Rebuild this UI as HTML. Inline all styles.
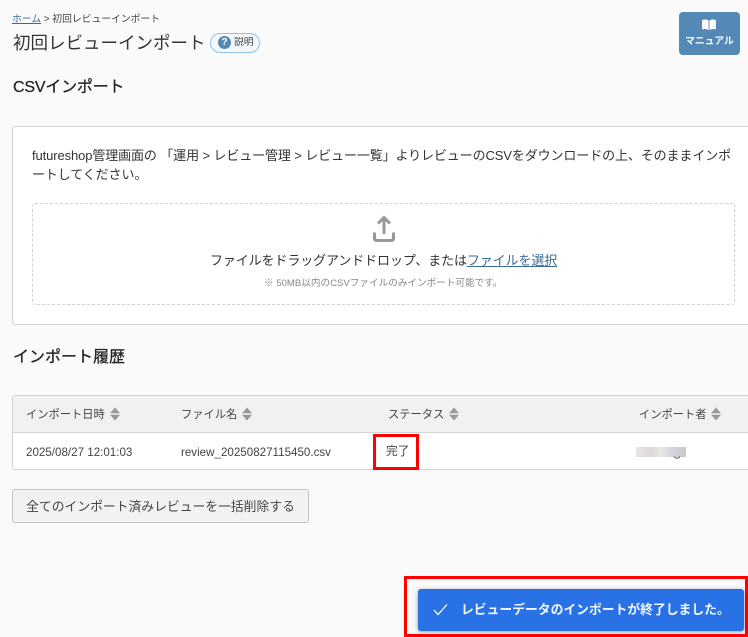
<!DOCTYPE html>
<html lang="ja">
<head>
<meta charset="utf-8">
<style>
html,body{margin:0;padding:0;width:748px;height:637px;overflow:hidden;background:#fafafa;}
body{font-family:"Liberation Sans","Noto Sans CJK JP",sans-serif;color:#333;position:relative;}
.a{position:absolute;white-space:nowrap;}
.th{font-size:11.25px;color:#444;top:407px;line-height:16px;}
.sort{position:absolute;width:10px;height:14px;top:407px;}
.td{font-size:11.6px;color:#444;top:445px;line-height:16px;}
</style>
</head>
<body>
<div class="a" style="left:12px;top:12.500px;font-size:9.800px;line-height:14px;color:#444;"><span style="color:#3b6a96;text-decoration:underline;">ホーム</span> &gt; 初回レビューインポート</div>
<div class="a" style="left:13px;top:31px;font-size:17.500px;line-height:24px;color:#333;">初回レビューインポート</div>
<div class="a" style="left:210px;top:33px;width:48px;height:18px;border:1px solid #8fc3e8;border-radius:10px;background:#f2f8fd;"></div>
<div class="a" style="left:218px;top:36px;width:13px;height:13px;border-radius:50%;background:#5589b5;color:#fff;font-size:10px;font-weight:bold;line-height:13px;text-align:center;">?</div>
<div class="a" style="left:234px;top:35.500px;font-size:9.800px;line-height:14px;color:#444;">説明</div>

<div class="a" style="left:679px;top:12px;width:61px;height:43px;background:#5589b5;border-radius:4px;"></div>
<svg class="a" style="left:702px;top:19px;" width="14" height="11" viewBox="0 0 15 12"><path d="M0 1.200C2.500 .2 5 .4 7 1.600V12C5 10.800 2.500 10.600 0 11.200ZM8 1.600C10 .4 12.500 .2 15 1.200V11.200C12.500 10.600 10 10.800 8 12Z" fill="#fff"/></svg>
<div class="a" style="left:679px;width:61px;top:35px;text-align:center;font-size:9.800px;font-weight:bold;line-height:14px;color:#f4f8fb;">マニュアル</div>

<div class="a" style="left:13px;top:77px;font-size:16px;letter-spacing:-.2px;line-height:22px;color:#222;-webkit-text-stroke:.25px #222;">CSVインポート</div>

<div class="a" style="left:12px;top:126px;width:740px;height:197px;background:#fff;border:1px solid #d4d4d4;border-radius:3px;"></div>
<div class="a" style="left:32px;top:146px;font-size:13px;line-height:19px;color:#333;letter-spacing:-.11px;">futureshop管理画面の 「運用 &gt; レビュー管理 &gt; レビュー一覧」よりレビューのCSVをダウンロードの上、そのままインポ<br>ートしてください。</div>
<div class="a" style="left:32px;top:203px;width:701px;height:100px;border:1px dashed #d0d0d0;border-radius:3px;"></div>
<svg class="a" style="left:372px;top:215px;" width="24" height="28" viewBox="0 0 24 28"><path d="M12 19V3M6 8.500L12 2.500 18 8.500M2.500 17.500V23.500Q2.500 25.500 4.500 25.500H19.500Q21.500 25.500 21.500 23.500V17.500" fill="none" stroke="#999" stroke-width="3"/></svg>
<div class="a" style="left:210px;top:252px;font-size:13px;line-height:18px;color:#333;letter-spacing:-.11px;">ファイルをドラッグアンドドロップ、または<span style="color:#3b6a96;text-decoration:underline;">ファイルを選択</span></div>
<div class="a" style="left:264px;top:277px;font-size:9.600px;line-height:14px;color:#888;">※ 50MB以内のCSVファイルのみインポート可能です。</div>

<div class="a" style="left:13px;top:347px;font-size:16px;line-height:22px;color:#222;-webkit-text-stroke:.25px #222;">インポート履歴</div>

<div class="a" style="left:12px;top:395px;width:740px;height:73px;background:#fff;border:1px solid #d4d4d4;border-radius:3px;"></div>
<div class="a" style="left:13px;top:396px;width:735px;height:36px;background:#f1f1f1;border-bottom:1px solid #d4d4d4;"></div>
<div class="a th" style="left:26px;">インポート日時</div>
<svg class="sort" style="left:110px;" viewBox="0 0 10 14"><path d="M5 .5L10 6.300H0ZM0 7.700H10L5 13.500Z" fill="#999"/></svg>
<div class="a th" style="left:181px;">ファイル名</div>
<svg class="sort" style="left:242px;" viewBox="0 0 10 14"><path d="M5 .5L10 6.300H0ZM0 7.700H10L5 13.500Z" fill="#999"/></svg>
<div class="a th" style="left:388px;">ステータス</div>
<svg class="sort" style="left:449px;" viewBox="0 0 10 14"><path d="M5 .5L10 6.300H0ZM0 7.700H10L5 13.500Z" fill="#999"/></svg>
<div class="a th" style="left:639px;">インポート者</div>
<svg class="sort" style="left:711px;" viewBox="0 0 10 14"><path d="M5 .5L10 6.300H0ZM0 7.700H10L5 13.500Z" fill="#999"/></svg>
<div class="a td" style="left:26px;">2025/08/27 12:01:03</div>
<div class="a td" style="left:181px;">review_20250827115450.csv</div>
<div class="a td" style="left:386px;top:443px;font-size:11.800px;">完了</div>
<div class="a" style="left:373px;top:434px;width:40px;height:30px;border:3px solid #f00;"></div>
<div class="a" style="left:636px;top:447px;width:50px;height:10px;background:linear-gradient(90deg,#e6e6e6,#ddd6d6 30%,#e8e8e0 50%,#d8d4de 70%,#c8c8cc);"></div>
<svg class="a" style="left:673px;top:456px;" width="8" height="4" viewBox="0 0 8 4"><path d="M1 .5Q4 4 7 .5" fill="none" stroke="#666"/></svg>

<div class="a" style="left:12px;top:489px;width:295px;height:32px;background:#f2f2f2;border:1px solid #c4c4c4;border-radius:3px;font-size:12.800px;line-height:33px;text-align:center;color:#444;">全てのインポート済みレビューを一括削除する</div>

<div class="a" style="left:404px;top:576px;width:338px;height:55px;border:3px solid #f00;"></div>
<div class="a" style="left:418px;top:589px;width:326px;height:42px;background:#2872e6;border-radius:3px;box-shadow:0 1px 4px rgba(0,0,0,.4);"></div>
<svg class="a" style="left:433px;top:603px;" width="15" height="13" viewBox="0 0 15 13"><path d="M1 7L5 11.500 14 1.500" fill="none" stroke="#fff" stroke-width="1.300"/></svg>
<div class="a" style="left:461px;top:600.500px;font-size:12.800px;font-weight:bold;line-height:18px;color:#f2f6ff;">レビューデータのインポートが終了しました。</div>
</body>
</html>
